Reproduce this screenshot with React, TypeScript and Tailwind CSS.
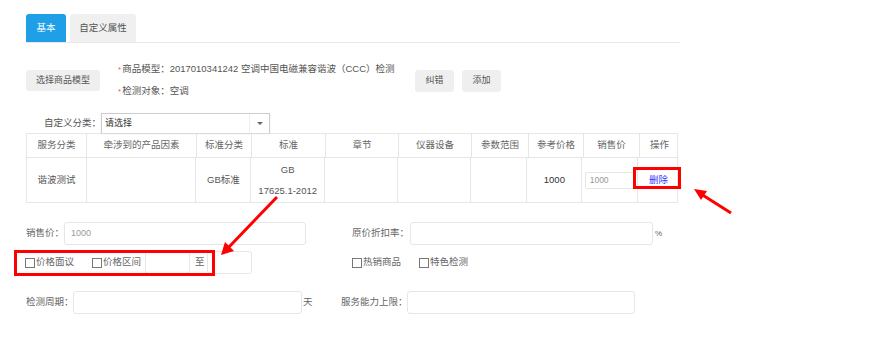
import React from 'react';

const headers = [
    { label: '服务分类', w: 'w-[60px]' },
    { label: '牵涉到的产品因素', w: 'w-[110px]' },
    { label: '标准分类', w: 'w-[55px]' },
    { label: '标准', w: 'w-[74px]' },
    { label: '章节', w: 'w-[73px]' },
    { label: '仪器设备', w: 'w-[73px]' },
    { label: '参数范围', w: 'w-[57px]' },
    { label: '参考价格', w: 'w-[55px]' },
    { label: '销售价', w: 'w-[56px]' },
    { label: '操作', w: 'w-[39px]' },
];

const Box: React.FC<{ label: string }> = ({ label }) => (
    <label className="flex items-center whitespace-nowrap text-[#666]">
        <span className="w-[10px] h-[10px] border border-[#777] bg-white mr-[1px] shrink-0" />
        {label}
    </label>
);

const Field: React.FC<{ className: string; value?: string }> = ({ className, value }) => (
    <div className={`h-[23px] shrink-0 border border-[#e6e6e6] rounded-[3px] bg-white flex items-center px-[6px] text-[9px] text-[#999] ${className}`}>
        {value}
    </div>
);

const App: React.FC = () => {
    return (
        <div className="relative w-[871px] h-[343px] bg-white overflow-hidden text-[#555] text-[9.5px] whitespace-nowrap" style={{ fontFamily: '"Liberation Sans", "Noto Sans CJK SC", sans-serif' }}>
            <div className="pl-[26px] pt-[14px] w-[680px]">
                {/* tabs */}
                <div className="flex gap-[4px] border-b border-[#e8e8e8]">
                    <div className="w-[40px] h-[28px] bg-[#1e9fe6] text-white rounded-t-[3px] flex items-center justify-center">基本</div>
                    <div className="w-[66px] h-[28px] bg-[#f0f0f0] text-[#555] rounded-t-[3px] flex items-center justify-center">自定义属性</div>
                </div>

                {/* model row */}
                <div className="flex items-start mt-[15px]">
                    <div className="mt-[12px] w-[74px] h-[21px] shrink-0 bg-[#efefef] rounded-[3px] text-[9px] text-[#555] flex items-center justify-center">选择商品模型</div>
                    <div className="ml-[18px] w-[297px] shrink-0 leading-[21px] text-[#555]">
                        <div><span className="text-[#e55] text-[8px] mr-[1px]">*</span>商品模型：2017010341242 空调中国电磁兼容谐波（CCC）检测</div>
                        <div><span className="text-[#e55] text-[8px] mr-[1px]">*</span>检测对象：空调</div>
                    </div>
                    <div className="mt-[12px] w-[39px] h-[22px] shrink-0 bg-[#efefef] rounded-[3px] text-[9px] flex items-center justify-center">纠错</div>
                    <div className="mt-[12px] ml-[8px] w-[39px] h-[22px] shrink-0 bg-[#efefef] rounded-[3px] text-[9px] flex items-center justify-center">添加</div>
                </div>

                {/* category select */}
                <div className="flex items-center mt-[11px] pl-[18px]">
                    <span className="text-[#555] w-[57px] shrink-0">自定义分类：</span>
                    <div className="w-[169px] h-[20px] border border-[#ccc] border-b-0 flex items-center bg-white shadow-[0_1px_2px_rgba(0,0,0,0.08)]">
                        <span className="flex-1 pl-[3px] text-[9px] text-[#333]">请选择</span>
                        <span className="w-[20px] h-full flex items-center justify-center border-l border-[#eee]">
                            <span className="w-0 h-0 border-l-[3px] border-r-[3px] border-t-[3px] border-l-transparent border-r-transparent border-t-[#666]" />
                        </span>
                    </div>
                </div>

                {/* table */}
                <div className="w-[652px] border border-[#e6e6e6] text-[#666]">
                    <div className="flex h-[24px] border-b border-[#e6e6e6]">
                        {headers.map((h, i) => (
                            <div key={h.label} className={`${h.w} shrink-0 flex items-center justify-center ${i < headers.length - 1 ? 'border-r border-[#e6e6e6]' : ''}`}>{h.label}</div>
                        ))}
                    </div>
                    <div className="flex h-[44px] text-[#555]">
                        <div className="w-[60px] border-r border-[#e6e6e6] flex items-center justify-center">谐波测试</div>
                        <div className="w-[110px] border-r border-[#e6e6e6]" />
                        <div className="w-[55px] border-r border-[#e6e6e6] flex items-center justify-center">GB标准</div>
                        <div className="w-[74px] border-r border-[#e6e6e6] flex flex-col items-center justify-center leading-[21px]">
                            <span>GB</span>
                            <span>17625.1-2012</span>
                        </div>
                        <div className="w-[73px] border-r border-[#e6e6e6]" />
                        <div className="w-[73px] border-r border-[#e6e6e6]" />
                        <div className="w-[57px] border-r border-[#e6e6e6]" />
                        <div className="w-[55px] border-r border-[#e6e6e6] flex items-center justify-center text-[#333]">1000</div>
                        <div className="w-[56px] border-r border-[#e6e6e6] flex items-center justify-center">
                            <div className="w-[50px] h-[17px] border border-[#e6e6e6] rounded-[2px] flex items-center pl-[4px] text-[8.5px] text-[#999]">1000</div>
                        </div>
                        <div className="w-[39px] flex items-center justify-center pl-[2px] text-[#3a3aff]">删除</div>
                    </div>
                </div>

                {/* form */}
                <div className="text-[#666]">
                    <div className="flex items-center mt-[19px]">
                        <span className="w-[38px] shrink-0">销售价：</span>
                        <Field className="w-[242px]" value="1000" />
                        <span className="ml-[46px] w-[58px] shrink-0">原价折扣率：</span>
                        <Field className="w-[243px]" />
                        <span className="ml-[2px] text-[8px]">%</span>
                    </div>
                    <div className="flex items-center mt-[6px] h-[23px]">
                        <div className="-ml-[1px] w-[67px] shrink-0"><Box label="价格面议" /></div>
                        <div className="w-[53px] shrink-0"><Box label="价格区间" /></div>
                        <Field className="w-[45px]" />
                        <span className="ml-[5px] w-[12px] shrink-0">至</span>
                        <Field className="w-[45px]" />
                        <div className="ml-[100px] w-[67px] shrink-0"><Box label="热销商品" /></div>
                        <Box label="特色检测" />
                    </div>
                    <div className="flex items-center mt-[17px]">
                        <span className="w-[47px] shrink-0">检测周期：</span>
                        <Field className="w-[229px]" />
                        <span className="ml-[1px] w-[38px] shrink-0">天</span>
                        <span className="w-[66px] shrink-0">服务能力上限：</span>
                        <Field className="w-[228px]" />
                    </div>
                </div>
            </div>

            {/* annotations */}
            <div className="absolute left-[633px] top-[167px] w-[48px] h-[22px] border-[3px] border-[#ff0000]" />
            <div className="absolute left-[14px] top-[250px] w-[201px] h-[26px] border-[3px] border-[#ff0000]" />
            <svg className="absolute left-0 top-0 pointer-events-none" width="871" height="343">
                <line x1="731" y1="213" x2="701" y2="194" stroke="#ff0000" strokeWidth="3" />
                <polygon points="694,189 707,191 701,200" fill="#ff0000" />
                <line x1="277" y1="197" x2="228" y2="248" stroke="#ff0000" strokeWidth="3" />
                <polygon points="221,255 225,242 234,251" fill="#ff0000" />
            </svg>
        </div>
    );
};

export default App;
